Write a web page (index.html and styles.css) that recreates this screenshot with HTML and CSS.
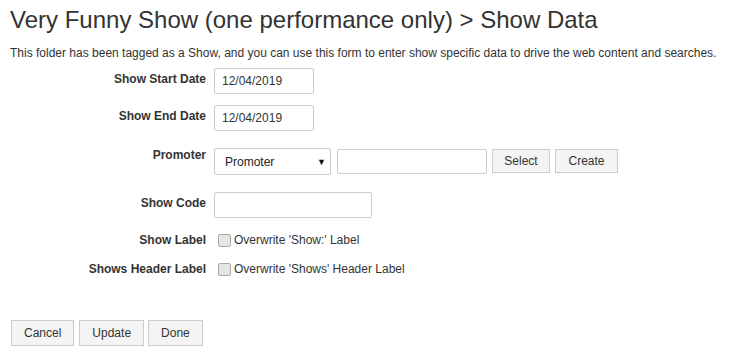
FILE: index.html
```html
<!DOCTYPE html>
<html lang="en">
<head>
    <meta charset="UTF-8">
    <meta name="viewport" content="width=device-width, initial-scale=1.0">
    <title>Show Data</title>
    <link rel="stylesheet" href="styles.css">
</head>
<body>
    <h1>Very Funny Show (one performance only) &gt; Show Data</h1>
    <p class="intro">This folder has been tagged as a Show, and you can use this form to enter show specific data to drive the web content and searches.</p>

    <form class="show-form">
        <div class="form-row row-start">
            <label class="field-label">Show Start Date</label>
            <input class="text-input date-input" type="text" value="12/04/2019">
        </div>
        <div class="form-row row-end">
            <label class="field-label">Show End Date</label>
            <input class="text-input date-input" type="text" value="12/04/2019">
        </div>
        <div class="form-row row-promoter">
            <label class="field-label">Promoter</label>
            <div class="controls">
                <div class="select-box">
                    <span>Promoter</span>
                    <span class="arrow">&#9660;</span>
                </div>
                <input class="text-input promoter-input" type="text">
                <button type="button" class="btn btn-select">Select</button>
                <button type="button" class="btn btn-create">Create</button>
            </div>
        </div>
        <div class="form-row row-code">
            <label class="field-label">Show Code</label>
            <input class="text-input code-input" type="text">
        </div>
        <div class="form-row check-row row-label">
            <label class="field-label">Show Label</label>
            <label class="check"><span class="box"></span>Overwrite 'Show:' Label</label>
        </div>
        <div class="form-row check-row row-header">
            <label class="field-label">Shows Header Label</label>
            <label class="check"><span class="box"></span>Overwrite 'Shows' Header Label</label>
        </div>

        <div class="actions">
            <button type="button" class="btn btn-lg">Cancel</button>
            <button type="button" class="btn btn-lg">Update</button>
            <button type="button" class="btn btn-lg btn-done">Done</button>
        </div>
    </form>
</body>
</html>
```

FILE: styles.css
```css
body {
    font-family: "Liberation Sans", Arial, sans-serif;
    font-size: 12px;
    color: #333;
    margin: 0;
    padding: 5px 10px;
    background: #fff;
}
h1 {
    font-size: 24px;
    font-weight: normal;
    line-height: 30px;
    margin: 0 0 10px 0;
    color: #333;
}
.intro {
    margin: 0;
    line-height: 16px;
}
.show-form {
    margin-top: 7px;
}
.form-row {
    display: flex;
    align-items: flex-start;
    gap: 8px;
}
.field-label {
    width: 196px;
    flex: none;
    text-align: right;
    font-weight: bold;
    line-height: 16px;
    padding-top: 3px;
}
.row-end { margin-top: 11px; }
.row-promoter { margin-top: 17px; }
.row-promoter .field-label { padding-top: 0; margin-top: -1px; }
.row-code { margin-top: 17px; }
.row-label { margin-top: 14px; }
.row-header { margin-top: 13px; }
.check-row .field-label { padding-top: 0; }
.text-input {
    box-sizing: border-box;
    height: 26px;
    border: 1px solid #ccc;
    border-radius: 2px;
    padding: 0 7px;
    font-family: inherit;
    font-size: 12px;
    color: #333;
    margin: 0;
}
.date-input { width: 100px; }
.code-input { width: 158px; }
.promoter-input { width: 150px; margin-top: 1px; height: 25px; }
.controls {
    display: flex;
    align-items: flex-start;
}
.select-box {
    box-sizing: border-box;
    width: 117px;
    height: 27px;
    border: 1px solid #ccc;
    border-radius: 2px;
    display: flex;
    align-items: center;
    justify-content: space-between;
    padding: 0 4px 0 10px;
    color: #222;
    margin-right: 6px;
}
.arrow {
    font-size: 9px;
    color: #111;
}
.btn {
    box-sizing: border-box;
    height: 24px;
    margin-top: 1px;
    border: 1px solid #ccc;
    background: #f4f4f4;
    color: #333;
    font-family: inherit;
    font-size: 12px;
    padding: 0 12px;
    border-radius: 0;
}
.btn-select { width: 58px; padding: 0; margin-left: 5px; }
.btn-create { width: 63px; padding: 0; margin-left: 5px; }
.check {
    display: flex;
    align-items: center;
    gap: 3px;
    line-height: 16px;
    margin-left: 4px;
}
.box {
    box-sizing: border-box;
    width: 13px;
    height: 13px;
    border: 1px solid #aaa;
    border-radius: 2px;
    background: #e5e5e5;
}
.actions {
    display: flex;
    gap: 5px;
    margin-top: 43px;
    margin-left: 1px;
}
.btn-lg {
    height: 26px;
    margin-top: 0;
}
.btn-done { margin-left: -1px; }
```
